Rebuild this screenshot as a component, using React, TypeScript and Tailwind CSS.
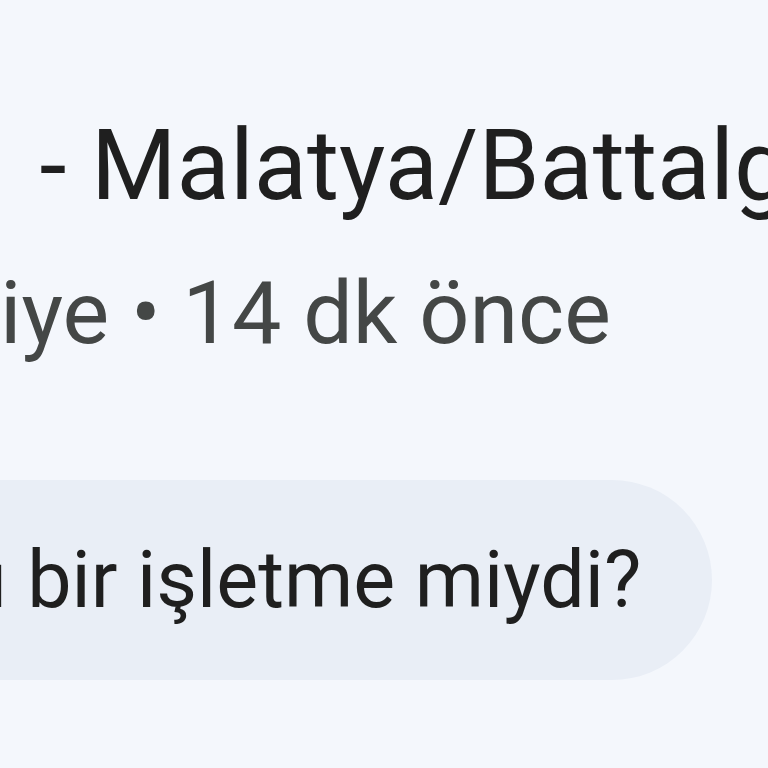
import React from "react";

const font = { fontFamily: "Roboto, 'Noto Sans', sans-serif" };

// a row whose first part is pushed out past the left edge, so the visible text starts at `lead`
const Row = ({
  hidden,
  visible,
  lead,
  className,
}: {
  hidden: string;
  visible: string;
  lead: string;
  className: string;
}) => (
  <div className={`flex whitespace-pre ${className}`}>
    <div className={`flex justify-end shrink-0 ${lead}`}>
      <span className="shrink-0">{hidden}</span>
    </div>
    <span className="shrink-0">{visible}</span>
  </div>
);

export default function App() {
  return (
    <div
      className="w-[768px] h-[768px] overflow-hidden bg-[#f4f7fc] flex flex-col"
      style={font}
    >
      <div className="pt-[117px]">
        <Row
          hidden="Battalgazi Belediyesi"
          visible={"  - Malatya/Battalgazi"}
          lead="w-[0px] -ml-[9px]"
          className="text-[98px] leading-none text-[#1f1f1f]"
        />
      </div>
      <div className="pt-[54px]">
        <Row
          hidden="Türk"
          visible="iye • 14 dk önce"
          lead="w-[0px]"
          className="text-[88px] leading-none text-[#444746]"
        />
      </div>
      <div className="pt-[123px] flex">
        <div className="h-[200px] w-[712px] shrink-0 rounded-r-full bg-[#e9eef6] flex items-center overflow-hidden">
          <Row
            hidden="Bu faydal"
            visible="ı bir işletme miydi?"
            lead="w-[0px] -ml-[12px]"
            className="text-[79px] leading-none text-[#1f1f1f]"
          />
        </div>
      </div>
    </div>
  );
}
